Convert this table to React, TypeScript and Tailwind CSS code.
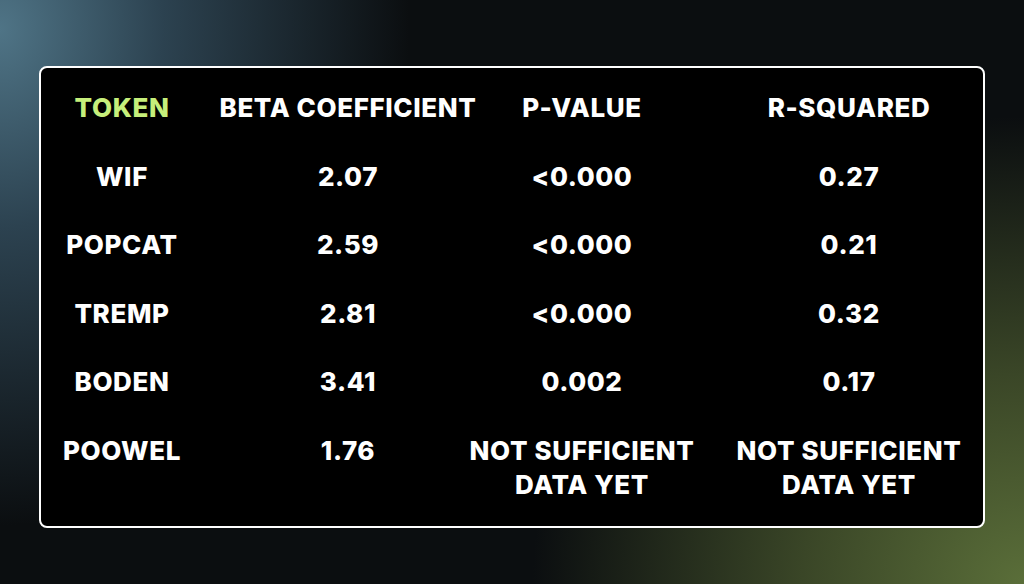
const rows = [
  ["WIF", "2.07", "<0.000", "0.27"],
  ["POPCAT", "2.59", "<0.000", "0.21"],
  ["TREMP", "2.81", "<0.000", "0.32"],
  ["BODEN", "3.41", "0.002", "0.17"],
];

const Cell = ({ children, className = "" }: { children: React.ReactNode; className?: string }) => (
  <div className={"flex justify-center text-center whitespace-nowrap " + className}>{children}</div>
);

export default function App() {
  return (
    <main className="w-[1024px] h-[584px] bg-[#0b0e10] bg-[radial-gradient(ellipse_40%_85%_at_0%_5%,#4f7486_0%,#2c4250_40%,transparent_100%),radial-gradient(ellipse_48%_80%_at_100%_100%,#5a6e39_0%,#3a4627_45%,transparent_100%)] flex items-start justify-center pt-[66px] font-['Inter',sans-serif]">
      <section className="w-[946px] h-[462px] bg-black border-2 border-white rounded-[8px] pt-[23px]">
        <div className="grid grid-cols-[162px_290px_178px_1fr] gap-y-[34.5px] text-[26px] leading-[34px] font-extrabold text-white tracking-[0.6px]">
          <Cell className="text-[#c6ef7b]">TOKEN</Cell>
          <Cell>BETA COEFFICIENT</Cell>
          <Cell>P-VALUE</Cell>
          <Cell className="pl-[44px]">R-SQUARED</Cell>
          {rows.map((r) => (
            <>
              <Cell key={r[0]}>{r[0]}</Cell>
              <Cell>{r[1]}</Cell>
              <Cell>{r[2]}</Cell>
              <Cell className="pl-[44px]">{r[3]}</Cell>
            </>
          ))}
          <Cell>POOWEL</Cell>
          <Cell>1.76</Cell>
          <Cell>NOT SUFFICIENT<br />DATA YET</Cell>
          <Cell className="pl-[44px]">NOT SUFFICIENT<br />DATA YET</Cell>
        </div>
      </section>
    </main>
  );
}
